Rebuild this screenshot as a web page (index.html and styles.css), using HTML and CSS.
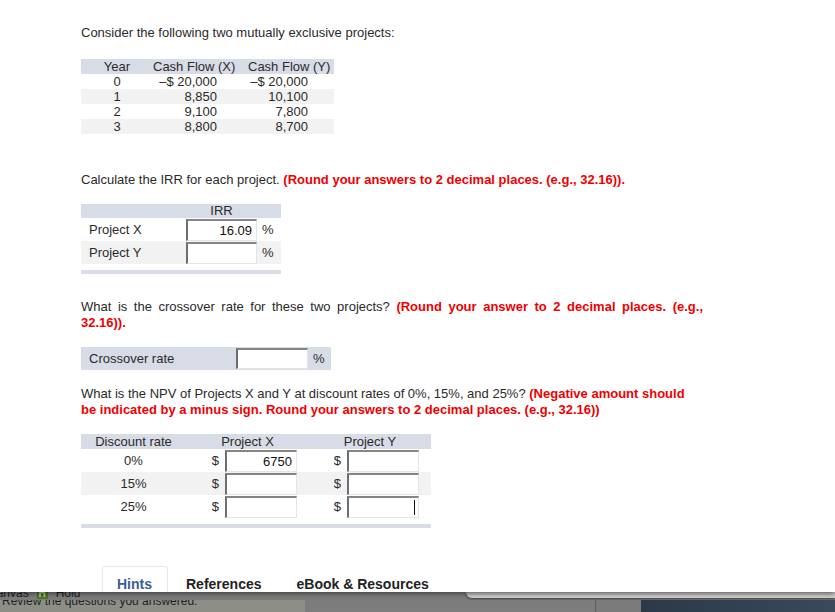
FILE: index.html
```html
<!DOCTYPE html>
<html>
<head>
<meta charset="utf-8">
<link rel="stylesheet" href="styles.css">
</head>
<body>
<div class="modal">
  <div class="content">
    <p class="intro">Consider the following two mutually exclusive projects:</p>
    <div class="cf">
      <div class="cf-row cf-head"><span class="c1">Year</span><span class="c2">Cash Flow (X)</span><span class="c3">Cash Flow (Y)</span></div>
      <div class="cf-row"><span class="c1">0</span><span class="c2 v">–$ 20,000</span><span class="c3 v">–$ 20,000</span></div>
      <div class="cf-row alt"><span class="c1">1</span><span class="c2 v">8,850</span><span class="c3 v">10,100</span></div>
      <div class="cf-row"><span class="c1">2</span><span class="c2 v">9,100</span><span class="c3 v">7,800</span></div>
      <div class="cf-row alt"><span class="c1">3</span><span class="c2 v">8,800</span><span class="c3 v">8,700</span></div>
    </div>

    <p class="q q-irr">Calculate the IRR for each project. <b class="red">(Round your answers to 2 decimal places. (e.g., 32.16)).</b></p>
    <div class="irr">
      <div class="irr-head"><span></span><span class="center">IRR</span><span></span></div>
      <div class="irr-row"><span class="lbl">Project X</span><div class="inp">16.09</div><span class="pct">%</span></div>
      <div class="irr-row alt"><span class="lbl">Project Y</span><div class="inp"></div><span class="pct">%</span></div>
      <div class="bar"></div>
    </div>

    <p class="q q-cross">What is the crossover rate for these two projects? <b class="red">(Round your answer to 2 decimal places. (e.g., 32.16)).</b></p>
    <div class="cross"><span class="lbl">Crossover rate</span><div class="inp"></div><span class="pct">%</span></div>

    <p class="q q-npv">What is the NPV of Projects X and Y at discount rates of 0%, 15%, and 25%? <b class="red">(Negative amount should<br>be indicated by a minus sign. Round your answers to 2 decimal places. (e.g., 32.16))</b></p>
    <div class="npv">
      <div class="npv-head"><span>Discount rate</span><span>Project X</span><span>Project Y</span></div>
      <div class="npv-row"><span class="rate">0%</span><div class="money"><span>$</span><div class="inp">6750</div></div><div class="money"><span>$</span><div class="inp"></div></div></div>
      <div class="npv-row alt"><span class="rate">15%</span><div class="money"><span>$</span><div class="inp"></div></div><div class="money"><span>$</span><div class="inp"></div></div></div>
      <div class="npv-row"><span class="rate">25%</span><div class="money"><span>$</span><div class="inp"></div></div><div class="money"><span>$</span><div class="inp"><span class="caret"></span></div></div></div>
      <div class="bar"></div>
    </div>
  </div>

  <div class="tabs">
    <div class="tab active">Hints</div>
    <div class="tab">References</div>
    <div class="tab">eBook &amp; Resources</div>
  </div>
</div>

<div class="strip">
  <div class="strip-top">
    <div class="behind-nav"><span>Canvas</span><span class="hicon">H</span><span>Hold</span></div>
    <div class="card-edge"></div>
  </div>
  <div class="strip-bottom">
    <div class="sb-a"><span class="sb-text">Review the questions you answered:</span></div>
    <div class="sb-b"></div>
    <div class="sb-c"></div>
    <div class="sb-d"></div>
  </div>
</div>
</body>
</html>
```

FILE: styles.css
```css
html, body {
  margin: 0;
  padding: 0;
}
body {
  width: 835px;
  height: 612px;
  overflow: hidden;
  font-family: "Liberation Sans", Arial, sans-serif;
  font-size: 13px;
  color: #2a2a2a;
  background: #7c7c7c;
}
p { margin: 0; }

.modal {
  position: relative;
  z-index: 2;
  height: 592px;
  background: #fff;
  display: flex;
  flex-direction: column;
  box-shadow: 0 2px 5px rgba(0,0,0,0.55);
}
.content {
  padding-left: 81px;
}
.intro {
  margin-top: 25px;
  line-height: 16px;
}
.red {
  color: #ee0000;
  font-weight: bold;
}
.q { line-height: 16px; }

/* cash flow table */
.cf {
  margin-top: 18px;
  width: 253px;
}
.cf-row {
  display: grid;
  grid-template-columns: 72px 91px 90px;
  height: 15px;
  line-height: 15px;
}
.cf-head { background: #d8dce6; }
.alt { background: #f2f2f2; }
.c1 { text-align: center; }
.cf-head .c3 { padding-left: 4px; }
.c2.v { text-align: right; padding-right: 27px; }
.c3.v { text-align: right; padding-right: 26px; }

.q-irr { margin-top: 38px; }

/* inputs */
.inp {
  box-sizing: border-box;
  background: #fff;
  border-top: 2px solid #858585;
  border-left: 2px solid #6e6e6e;
  border-right: 1px solid #e4e4e4;
  border-bottom: 1px solid #e4e4e4;
  height: 22px;
  line-height: 19px;
  text-align: right;
  padding-right: 4px;
  color: #111;
  position: relative;
}
.caret {
  position: absolute;
  right: 3px;
  top: 2px;
  width: 1px;
  height: 15px;
  background: #111;
}

/* IRR table */
.irr {
  margin-top: 16px;
  width: 200px;
}
.irr-head {
  display: grid;
  grid-template-columns: 105px 71px 24px;
  height: 14px;
  line-height: 14px;
  background: #d8dce6;
}
.center { text-align: center; }
.irr-row {
  display: grid;
  grid-template-columns: 105px 71px 24px;
  height: 23px;
  align-items: center;
}
.irr-row .inp { margin-top: 1px; }
.lbl { padding-left: 8px; }
.pct { padding-left: 5px; }
.bar {
  margin-top: 6px;
  height: 4px;
  background: #d8dce6;
  border-radius: 1px;
}

/* crossover */
.q-cross {
  margin-top: 25px;
  width: 622px;
  text-align: justify;
}
.cross {
  margin-top: 16px;
  width: 250px;
  height: 23px;
  display: grid;
  grid-template-columns: 155px 72px 23px;
  align-items: center;
  background: #d8dce6;
}
.cross .inp { height: 21px; }

/* NPV */
.q-npv {
  margin-top: 16px;
}
.npv {
  margin-top: 16px;
  width: 350px;
}
.npv-head {
  display: grid;
  grid-template-columns: 105px 123px 122px;
  height: 15px;
  line-height: 15px;
  background: #d8dce6;
  text-align: center;
}
.npv-row {
  display: grid;
  grid-template-columns: 105px 123px 122px;
  height: 23px;
  align-items: center;
}
.rate { text-align: center; }
.money {
  display: flex;
  justify-content: flex-end;
  align-items: center;
  gap: 6px;
  padding-right: 12px;
}
.money .inp {
  width: 72px;
  margin-top: 1px;
}

/* tabs */
.tabs {
  margin-top: auto;
  margin-left: 102px;
  display: flex;
}
.tab {
  box-sizing: border-box;
  height: 26px;
  padding: 9px 17px 0 17px;
  line-height: 16px;
  font-size: 14px;
  font-weight: bold;
  color: #222;
  border: 1px solid transparent;
  border-bottom: none;
}
.tab.active {
  color: #3d5e95;
  padding-left: 14px;
  padding-right: 15px;
  border-color: #e8e8e8;
  border-radius: 3px 3px 0 0;
}
.tab + .tab:last-child { padding-left: 16px; }

/* page behind the modal */
.strip {
  position: relative;
  z-index: 1;
  height: 20px;
  display: flex;
  flex-direction: column;
}
.strip-top {
  height: 8px;
  display: flex;
  justify-content: space-between;
  background: linear-gradient(#8a8a8a, #7a7a7a);
}
.behind-nav {
  display: flex;
  align-items: center;
  gap: 8px;
  margin-top: -6px;
  margin-left: -12px;
  height: 14px;
  line-height: 14px;
  font-size: 12px;
  color: #1e1e1e;
}
.hicon {
  width: 11px;
  height: 11px;
  background: #4c7a22;
  color: #c7d9a6;
  font-size: 10px;
  font-weight: bold;
  line-height: 11px;
  text-align: center;
}
.card-edge {
  width: 369px;
  height: 6px;
  background: #d2d2d2;
  border-radius: 0 0 0 6px;
  box-shadow: 0 1px 3px rgba(0,0,0,0.5);
}
.strip-bottom {
  flex: 1;
  display: flex;
}
.sb-a {
  width: 303px;
  background: #8d8f86;
  color: #1f1f1f;
  font-size: 12px;
  line-height: 12px;
  padding-left: 2px;
  overflow: hidden;
  white-space: nowrap;
}
.sb-text {
  display: block;
  margin-top: -5px;
}
.sb-b {
  width: 290px;
  background: #7d7d7d;
  border-right: 1px solid #5f5f5f;
}
.sb-c {
  width: 45px;
  background: #7b7b7b;
}
.sb-d {
  flex: 1;
  background: linear-gradient(90deg, #2b3949, #3a4a5a);
}
```
